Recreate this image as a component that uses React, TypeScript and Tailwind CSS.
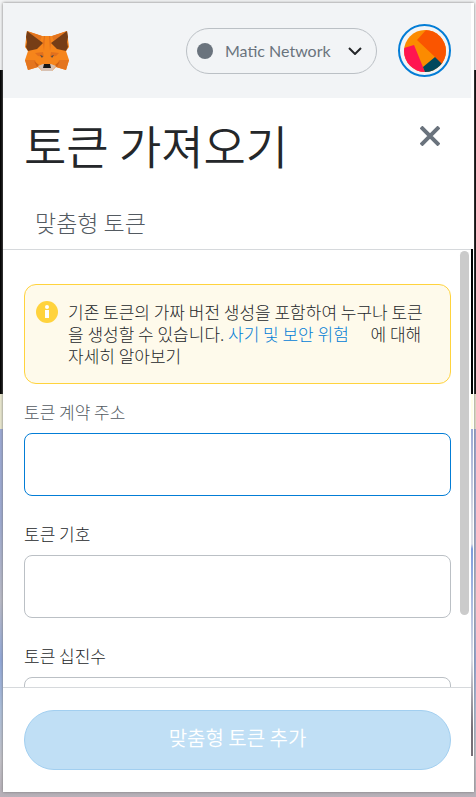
import React from "react";

function Fox() {
  return (
    <svg viewBox="0 0 44 40" className="h-10 w-11" role="img" aria-label="MetaMask">
      <path fill="#f6851b" d="M2 0 17 5H27L42 0 44 16 41 20 44 29 41 39 31 36 27 40H17L13 36 3 39 0 29 3 20 0 16Z" />
      <path fill="#e4751f" d="M2 0 17 5 15 10ZM42 0 27 5 29 10ZM0 29H10L13 36 3 39ZM44 29H34L31 36 41 39Z" />
      <path fill="#763d16" d="M2 0 18 12 12 18 3 20 1 16 2 11 1 6ZM42 0 26 12 32 18 41 20 43 16 42 11 43 6Z" />
      <path fill="#cd6116" d="M9 30 14 34 12 36ZM35 30 30 34 32 36Z" />
      <path fill="#e2701d" d="M10 22 18 21 19 26 13 25ZM34 22 26 21 25 26 31 25ZM19 5 18 12 19 20 20 5ZM25 5 26 12 25 20 24 5Z" />
      <path fill="#d7c1b3" d="M13 35 18 33H26L31 35 27 40H17Z" />
      <path fill="#161616" d="M19 33H25L26 37H18Z" />
      <path fill="#4d4a45" d="M15 24 18 25 17 27ZM29 24 26 25 27 27Z" />
    </svg>
  );
}

function AccountIcon() {
  return (
    <svg viewBox="0 0 42 42" className="size-[42px] rounded-full" aria-hidden="true">
      <rect width="42" height="42" fill="#fc8b00" />
      <path fill="#fa5500" d="M13 10 22 0H42V42L31 27Z" />
      <path fill="#ff1550" d="M0 18 10 15 21 42H0Z" />
      <path fill="#01485d" d="M19 37 31 27 38 34 42 42H21Z" />
    </svg>
  );
}

function Field({ id, label, active = false }: { id: string; label: string; active?: boolean }) {
  return (
    <div className="flex flex-col gap-[9px]">
      <label htmlFor={id} className={active ? "text-[17px] leading-6 text-[#535a61]" : "text-[17px] leading-6 text-[#24272a]"}>
        {label}
      </label>
      <input
        id={id}
        type="text"
        className={
          active
            ? "h-[63px] w-full rounded-lg border border-[#037dd6] bg-white px-4 outline-none"
            : "h-[63px] w-full rounded-lg border border-[#bbc0c5] bg-white px-4 outline-none"
        }
      />
    </div>
  );
}

export default function App() {
  return (
    <div className="flex h-screen flex-col bg-[linear-gradient(#f2f3f4_0_70px,#000_70px_394px,#e9e7ce_394px_429px,#9ba9d5_429px,#9daad2_520px,#bbbcc8_600px,#91a8db_660px,#adc0dc_710px,#c4c3ca_760px,#b7b0b8)] pt-[3px] pr-[2px] pb-[5px] pl-[3px] font-['Noto_Sans_CJK_KR',sans-serif] font-light text-[#24272a]">
      <main className="flex min-h-0 flex-1 flex-col bg-white shadow-[0_0_3px_#777]">
        <header className="mr-[3px] flex h-[95px] shrink-0 items-center bg-[#f2f4f6] pr-5 pl-[22px]">
          <Fox />
          <button type="button" className="ml-auto flex h-[46px] items-center rounded-full border border-[#bbc0c5] pr-[14px] pl-[10px] font-[Lato,sans-serif] text-base font-normal text-[#6a737d]">
            <span className="size-4 rounded-full bg-[#6a737d]" />
            <span className="w-[121px] pl-3 text-left">Matic Network</span>
            <svg viewBox="0 0 14 8" className="ml-[14px] h-2 w-[14px] fill-none stroke-[#24272a] stroke-2" aria-hidden="true">
              <path d="m1 1 6 6 6-6" />
            </svg>
          </button>
          <button type="button" aria-label="Account" className="ml-[21px] flex size-[53px] items-center justify-center rounded-full border-2 border-[#037dd6]">
            <AccountIcon />
          </button>
        </header>

        <div className="flex h-[151px] shrink-0 flex-col">
          <div className="flex items-start justify-between pt-[10px] pr-[34px] pl-[21px]">
            <h1 className="text-[46px] leading-[72px] font-[350]">토큰 가져오기</h1>
            <button type="button" aria-label="닫기" className="pt-[18px]">
              <svg viewBox="0 0 20 20" className="size-5 fill-none stroke-[#6a737d] stroke-4" aria-hidden="true">
                <path d="m1 1 18 18M19 1 1 19" />
              </svg>
            </button>
          </div>
          <h2 className="pt-[26px] pl-8 text-[23px] leading-8 text-[#535a61]">맞춤형 토큰</h2>
        </div>

        <div className="flex min-h-0 flex-1 items-start pr-px">
          <div className="flex h-full min-w-0 flex-1 flex-col">
            <section className="flex min-h-0 flex-1 gap-[9px] overflow-hidden border-t border-[#d6d9dc] pr-[2px] pl-[21px]">
              <div className="flex min-w-0 flex-1 flex-col pt-[34px]">
                <aside className="mb-4 flex h-[100px] shrink-0 gap-[10px] rounded-xl border border-[#ffd33d] bg-[#fefaeb] pt-4 pr-5 pl-[11px]">
                  <svg viewBox="0 0 22 22" className="size-[22px] shrink-0" aria-hidden="true">
                    <circle cx="11" cy="11" r="11" fill="#ffd33d" />
                    <circle cx="11" cy="6" r="2" fill="#fff" />
                    <path fill="#fff" d="M9 9h4v8H9z" />
                  </svg>
                  <p className="text-[17px] leading-[22px] break-all">
                    기존 토큰의 가짜 버전 생성을 포함하여 누구나 토큰을 생성할 수 있습니다.{" "}
                    <a href="#risks" className="mr-[18px] text-[#037dd6]">사기 및 보안 위험</a> 에 대해 자세히 알아보기
                  </p>
                </aside>
                <form className="flex flex-col gap-[26px]">
                  <Field id="address" label="토큰 계약 주소" active />
                  <Field id="symbol" label="토큰 기호" />
                  <Field id="decimals" label="토큰 십진수" />
                </form>
              </div>
              <div className="mt-px h-5/6 w-[9px] shrink-0 rounded-full bg-[#cbcbcb]" />
            </section>
            <footer className="flex h-[105px] shrink-0 items-start border-t border-[#d6d9dc] pt-[22px] pr-5 pl-[21px]">
              <button type="button" disabled className="h-[60px] w-full rounded-full border border-[#a2cff0] bg-[#c0dff5] pb-1 text-xl font-[350] text-white">
                맞춤형 토큰 추가
              </button>
            </footer>
          </div>
          <div className="h-[calc(100%_-_36px)] w-[2px] shrink-0 bg-[linear-gradient(#000_0_145px,#fffee8_145px_180px,#9ba9d5_180px,#dedfe5_275px,#dcdfe7_295px,#7e9bdc_300px,#d9dbe4_410px,#777078_480px)]" />
        </div>
      </main>
    </div>
  );
}
